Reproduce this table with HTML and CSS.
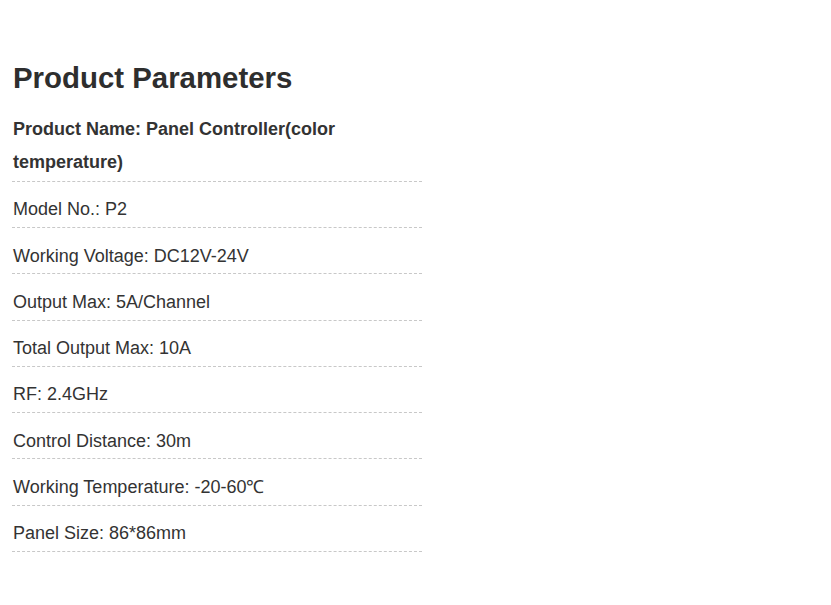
FILE: index.html
```html
<!DOCTYPE html>
<html lang="en">
<head>
<meta charset="utf-8">
<title>Product Parameters</title>
<link rel="stylesheet" href="styles.css">
</head>
<body>
<div class="params">
  <h2 class="params-title">Product Parameters</h2>
  <ul class="params-list">
    <li class="params-row params-row--bold">Product Name: Panel Controller(color temperature)</li>
    <li class="params-row">Model No.: P2</li>
    <li class="params-row">Working Voltage: DC12V-24V</li>
    <li class="params-row">Output Max: 5A/Channel</li>
    <li class="params-row">Total Output Max: 10A</li>
    <li class="params-row">RF: 2.4GHz</li>
    <li class="params-row">Control Distance: 30m</li>
    <li class="params-row">Working Temperature: -20-60℃</li>
    <li class="params-row">Panel Size: 86*86mm</li>
  </ul>
</div>
</body>
</html>
```
FILE: styles.css
```css
html, body {
  margin: 0;
  padding: 0;
  background: #ffffff;
}

body {
  font-family: "Liberation Sans", Arial, sans-serif;
  color: #333333;
}

.params {
  width: 410px;
  padding: 60px 0 0 12px;
}

.params-title {
  margin: 0 0 5px 1px;
  font-size: 29.4px;
  line-height: 35px;
  font-weight: bold;
  color: #2e2e2e;
}

.params-list {
  list-style: none;
  margin: 0;
  padding: 0;
}

.params-row {
  padding: 10.5px 0 0 1px;
  font-size: 18px;
  line-height: 34.75px;
  border-bottom: 1px dashed #c8c8c8;
}

.params-row--bold {
  padding: 13.25px 0 2.5px 1px;
  line-height: 32.5px;
  font-weight: bold;
}
```
